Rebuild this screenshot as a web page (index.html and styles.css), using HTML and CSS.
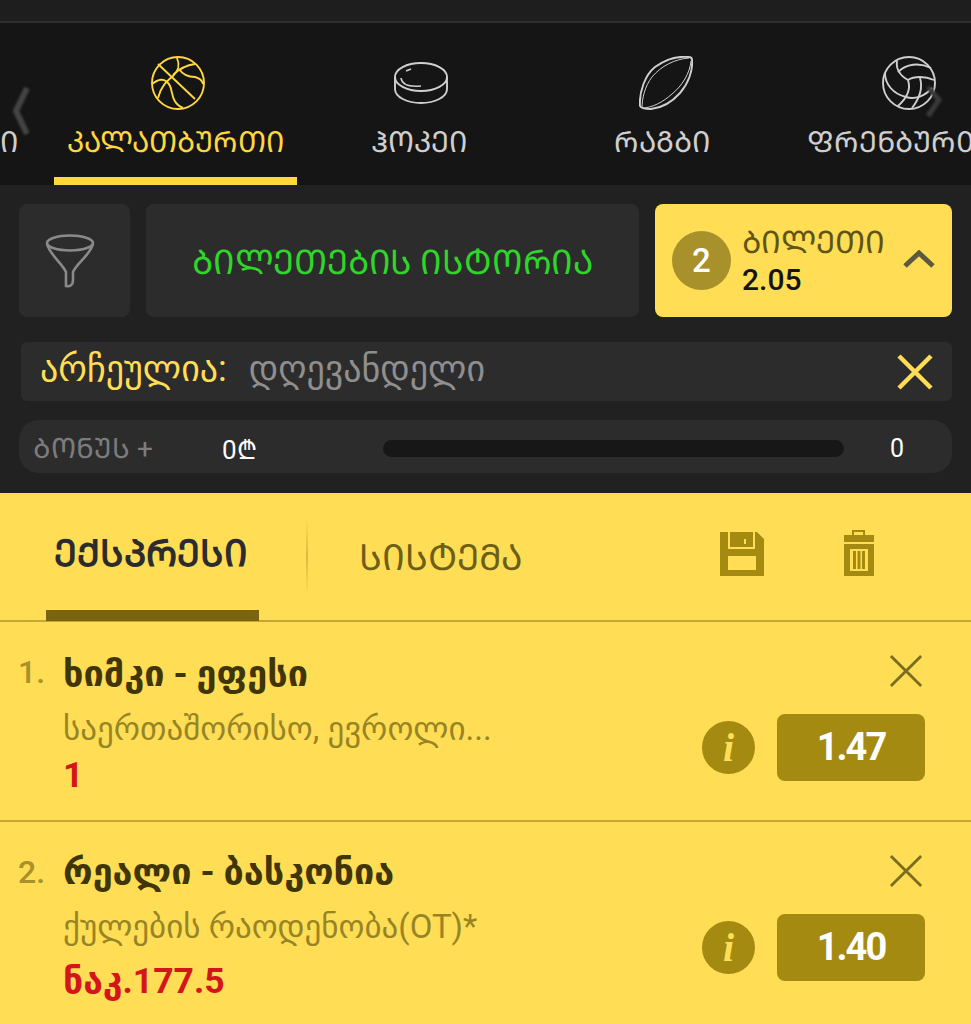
FILE: index.html
```html
<!DOCTYPE html>
<html lang="ka">
<head>
    <meta charset="UTF-8">
    <meta name="viewport" content="width=device-width, initial-scale=1.0">
    <title>ბილეთი</title>
    <link rel="stylesheet" href="styles.css">
</head>
<body>
    <div class="top-strip"></div>

    <nav class="sports">
        <div class="sports-track">
            <a class="sport"><span class="sport-icon"></span><span class="sport-name">ᲤᲔᲮᲑᲣᲠᲗᲘ</span></a>
            <a class="sport active">
                <svg class="sport-icon" viewBox="0 0 54 54" fill="none" stroke="currentColor" stroke-width="1.9">
                    <circle cx="27" cy="27" r="26"/>
                    <path d="M7 8L44 43"/>
                    <path d="M26 2C29 9 28 14 22 20C16 25 10 30 7 42"/>
                    <path d="M44 8C36 9 29 12 22 19"/>
                    <path d="M1 28C6 24 14 20 19 30C22 36 20 47 32 52"/>
                    <path d="M28 13C32 19 39 21 44 21C48 22 51 24 52 28"/>
                </svg>
                <span class="sport-name">ᲙᲐᲚᲐᲗᲑᲣᲠᲗᲘ</span>
            </a>
            <a class="sport">
                <svg class="sport-icon" viewBox="0 0 54 54" fill="none" stroke="currentColor" stroke-width="1.9">
                    <ellipse cx="27" cy="21" rx="26" ry="14"/>
                    <path d="M1 21V33C1 41 13 47 27 47S53 41 53 33V21"/>
                    <path d="M7 22C8 29 16 31 27 30" stroke-width="1.6"/>
                    <path d="M12 15L17 13" stroke-width="1.6"/>
                </svg>
                <span class="sport-name">ᲰᲝᲙᲔᲘ</span>
            </a>
            <a class="sport">
                <svg class="sport-icon" viewBox="0 0 54 54" fill="none" stroke="currentColor" stroke-width="1.9">
                    <path d="M50 1C40 0 27 3 16 11C6 19 0 36 1 50C2 53 8 53 12 53C22 52 33 46 41 37C49 28 54 15 53 4C53 2 52 1 50 1Z"/>
                    <path d="M50 2C36 3 22 10 13 21C6 30 3 42 3 52" stroke-width="1"/>
                    <path d="M52 5C51 17 43 30 33 38C24 46 13 52 3 52" stroke-width="1"/>
                </svg>
                <span class="sport-name">ᲠᲐᲒᲑᲘ</span>
            </a>
            <a class="sport">
                <svg class="sport-icon" viewBox="0 0 54 54" fill="none" stroke="currentColor" stroke-width="1.9">
                    <circle cx="27" cy="27" r="26"/>
                    <path d="M15 5C14 12 17 19 26 24"/>
                    <path d="M16 16C24 8 37 6 49 12"/>
                    <path d="M26 24C32 20 43 20 52 24"/>
                    <path d="M26 24C29 33 25 42 16 50"/>
                    <path d="M3 17C3 28 11 38 24 41"/>
                    <path d="M38 22C41 32 37 43 30 52"/>
                    <path d="M24 41C33 44 43 40 50 32"/>
                </svg>
                <span class="sport-name">ᲤᲠᲔᲜᲑᲣᲠᲗᲘ</span>
            </a>
        </div>
        <svg class="arrow arrow-left" viewBox="0 0 18 50" fill="none" stroke="currentColor" stroke-width="6">
            <path d="M15 2L4 25L15 48"/>
        </svg>
        <svg class="arrow arrow-right" viewBox="0 0 18 34" fill="none" stroke="currentColor" stroke-width="5">
            <path d="M3 2L14 15L3 31"/>
        </svg>
    </nav>

    <section class="panel">
        <div class="actions">
            <button class="action filter-btn">
                <svg class="funnel" viewBox="0 0 50 56" fill="none" stroke="currentColor" stroke-width="2.6">
                    <ellipse cx="25" cy="10" rx="23" ry="7.5"/>
                    <path d="M2 11C5 22 17 30 21 39V53C25 54 28 52 28 47V39C32 30 45 22 48 11"/>
                </svg>
            </button>
            <button class="action history-btn">ᲑᲘᲚᲔᲗᲔᲑᲘᲡ ᲘᲡᲢᲝᲠᲘᲐ</button>
            <button class="action ticket-btn">
                <span class="ticket-count">2</span>
                <span class="ticket-info">
                    <span class="ticket-label">ᲑᲘᲚᲔᲗᲘ</span>
                    <span class="ticket-total">2.05</span>
                </span>
                <svg class="ticket-arrow" viewBox="0 0 32 18" fill="none" stroke="currentColor" stroke-width="5">
                    <path d="M2 16L16 3L30 16"/>
                </svg>
            </button>
        </div>

        <div class="selected">
            <span class="selected-label">არჩეულია:</span>
            <span class="selected-value">დღევანდელი</span>
            <svg class="selected-close" viewBox="0 0 36 36" stroke="currentColor" stroke-width="4.5">
                <path d="M2 2L34 34M34 2L2 34"/>
            </svg>
        </div>

        <div class="bonus">
            <span class="bonus-label">ᲑᲝᲜᲣᲡ +</span>
            <span class="bonus-sum">0₾</span>
            <span class="bonus-bar"></span>
            <span class="bonus-count">0</span>
        </div>
    </section>

    <section class="slip">
        <div class="slip-tabs">
            <a class="slip-tab active">ᲔᲥᲡᲞᲠᲔᲡᲘ</a>
            <span class="slip-divider"></span>
            <a class="slip-tab">ᲡᲘᲡᲢᲔᲛᲐ</a>
            <svg class="save-icon" viewBox="0 0 44 44" fill="currentColor">
                <path fill-rule="evenodd" d="M0 0H37L44 7V44H0ZM8 0V17H35V0H33V15H10V0ZM24 7V12H26V7ZM8 24V38H36V24Z"/>
            </svg>
            <svg class="trash-icon" viewBox="0 0 30 46" fill="currentColor">
                <path fill-rule="evenodd" d="M8 0H21V5H30V12H0V5H8ZM10 2V5H19V2ZM0 14H30V46H0ZM6 19V41H24V19Z"/>
                <path d="M9 21H12V39H9ZM13.5 21H16.5V39H13.5ZM18 21H21V39H18Z"/>
            </svg>
        </div>

        <div class="bet">
            <span class="bet-num">1.</span>
            <div class="bet-main">
                <div class="bet-title">ხიმკი - ეფესი</div>
                <div class="bet-league">საერთაშორისო, ევროლი...</div>
                <div class="bet-pick">1</div>
            </div>
            <div class="bet-side">
                <svg class="bet-close" viewBox="0 0 36 36" stroke="currentColor" stroke-width="3">
                    <path d="M2 2L34 34M34 2L2 34"/>
                </svg>
                <div class="bet-odds-row">
                    <span class="info">i</span>
                    <span class="odds">1.47</span>
                </div>
            </div>
        </div>

        <div class="bet">
            <span class="bet-num">2.</span>
            <div class="bet-main">
                <div class="bet-title">რეალი - ბასკონია</div>
                <div class="bet-league">ქულების რაოდენობა(OT)*</div>
                <div class="bet-pick">ნაკ.177.5</div>
            </div>
            <div class="bet-side">
                <svg class="bet-close" viewBox="0 0 36 36" stroke="currentColor" stroke-width="3">
                    <path d="M2 2L34 34M34 2L2 34"/>
                </svg>
                <div class="bet-odds-row">
                    <span class="info">i</span>
                    <span class="odds">1.40</span>
                </div>
            </div>
        </div>
    </section>
</body>
</html>
```

FILE: styles.css
```css
:root {
    --color-yellow: #ffde55;
    --color-olive: #a58a12;
    --color-panel: #212121;
    --color-box: #2c2c2c;
}

* {
    margin: 0;
    padding: 0;
    box-sizing: border-box;
}

body {
    width: 971px;
    height: 1024px;
    overflow: hidden;
    background-color: var(--color-panel);
    font-family: Roboto, "DejaVu Sans", sans-serif;
}

.top-strip {
    height: 23px;
    background-color: #1e1e1e;
    border-bottom: 2px solid #2f2f2f;
}

/* Sports row */
.sports {
    position: relative;
    height: 162px;
    background-color: #151515;
    overflow: hidden;
}

.sports-track {
    display: flex;
    margin-left: -189px;
}

.sport {
    flex: 0 0 243px;
    height: 162px;
    display: flex;
    flex-direction: column;
    align-items: center;
    padding-top: 33px;
    color: #cfcfcf;
    border-bottom: 8px solid transparent;
}

.sport.active {
    color: #ffd740;
    border-bottom-color: #ffd740;
}

.sport-icon {
    width: 54px;
    height: 54px;
    margin-left: 5px;
}

.sport:nth-child(n+4) .sport-icon {
    margin-left: 9px;
}

.sport-name {
    margin-top: 14px;
    font-size: 29px;
    line-height: 36px;
    white-space: nowrap;
}

.arrow {
    position: absolute;
    color: #444;
    filter: blur(1px);
}

.arrow-left {
    left: 12px;
    top: 63px;
    width: 18px;
    height: 50px;
}

.arrow-right {
    left: 925px;
    top: 62px;
    width: 18px;
    height: 34px;
    color: #3a3a3a;
}

/* Dark panel */
.panel {
    height: 308px;
    padding: 19px 19px 0;
}

.actions {
    display: flex;
    gap: 16px;
    height: 113px;
}

.action {
    border: none;
    border-radius: 8px;
    background-color: var(--color-box);
    font-family: inherit;
    display: flex;
    align-items: center;
    justify-content: center;
}

.filter-btn {
    flex: 0 0 111px;
    color: #8a8a8a;
}

.funnel {
    width: 50px;
    height: 56px;
    margin-right: 10px;
}

.history-btn {
    flex: 0 0 493px;
    color: #2fd62a;
    font-size: 34px;
    letter-spacing: -0.2px;
}

.ticket-btn {
    flex: 0 0 297px;
    background-color: var(--color-yellow);
    justify-content: flex-start;
    padding-left: 17px;
}

.ticket-count {
    width: 59px;
    height: 59px;
    border-radius: 50%;
    background-color: #a8902a;
    color: #fff;
    font-size: 33px;
    font-weight: 500;
    line-height: 59px;
    text-align: center;
}

.ticket-info {
    display: flex;
    flex-direction: column;
    align-items: flex-start;
    margin-left: 11px;
}

.ticket-label {
    color: #5f5416;
    font-size: 31px;
    line-height: 38px;
}

.ticket-total {
    color: #141414;
    font-size: 30px;
    font-weight: 500;
    line-height: 36px;
}

.ticket-arrow {
    width: 32px;
    height: 18px;
    margin: 0 17px 4px auto;
    color: #5b5a3e;
    filter: blur(0.6px);
}

.selected {
    display: flex;
    align-items: center;
    height: 59px;
    margin: 25px 0 0 2px;
    padding: 0 19px;
    border-radius: 6px;
    background-color: var(--color-box);
    font-size: 36px;
}

.selected-label {
    color: var(--color-yellow);
    margin-bottom: 6px;
}

.selected-value {
    margin: 0 0 6px 22px;
    color: #8f8f8f;
}

.selected-close {
    width: 36px;
    height: 36px;
    margin-left: auto;
    color: var(--color-yellow);
}

.bonus {
    display: flex;
    align-items: center;
    height: 53px;
    margin-top: 19px;
    padding: 4px 0 0 14px;
    border-radius: 20px;
    background-color: var(--color-box);
}

.bonus-label {
    width: 189px;
    margin-bottom: 4px;
    color: #7c7c7c;
    font-size: 28px;
}

.bonus-sum {
    width: 161px;
    color: #fff;
    font-size: 26px;
}

.bonus-bar {
    width: 461px;
    height: 17px;
    border-radius: 9px;
    background-color: #171717;
}

.bonus-count {
    margin-left: 46px;
    color: #fff;
    font-size: 25px;
}

/* Yellow slip */
.slip {
    height: 531px;
    background-color: var(--color-yellow);
}

.slip-tabs {
    display: flex;
    align-items: center;
    position: relative;
    height: 129px;
    padding-left: 46px;
    border-bottom: 2px solid #c4a832;
    color: var(--color-olive);
}

.slip-tab {
    color: #6d5f18;
    font-size: 36px;
    white-space: nowrap;
}

.slip-tab.active {
    width: 213px;
    height: 129px;
    padding: 0 8px;
    line-height: 124px;
    color: #2b2c2e;
    font-size: 37px;
    font-weight: 700;
    border-bottom: 11px solid #7a640f;
}

.slip-divider {
    width: 2px;
    height: 78px;
    margin: 0 51px 0 47px;
    background: linear-gradient(to bottom, #ffde55, #d9bc3e, #ffde55);
}

.save-icon {
    width: 44px;
    height: 44px;
    margin-left: auto;
    margin-bottom: 5px;
}

.trash-icon {
    width: 30px;
    height: 46px;
    margin: 0 97px 8px 80px;
}

.bet {
    display: flex;
    height: 200px;
    padding: 32px 46px 0 18px;
    border-bottom: 2px solid #c4a832;
}

.bet + .bet {
    border-bottom: none;
}

.bet-num {
    width: 45px;
    color: #a89128;
    font-size: 32px;
    font-weight: 500;
    line-height: 36px;
}

.bet-main {
    flex: 1;
}

.bet-title {
    color: #3f3505;
    font-size: 36px;
    font-weight: 700;
    line-height: 40px;
}

.bet-league {
    margin-top: 17px;
    color: #978525;
    font-size: 33px;
    line-height: 36px;
}

.bet-pick {
    margin-top: 8px;
    color: #d4161c;
    font-size: 35.5px;
    font-weight: 700;
    line-height: 40px;
}

/* second row sits a little tighter on top, pick lower */
.bet + .bet .bet-main {
    margin-top: -2px;
}

.bet + .bet .bet-pick {
    margin-top: 16px;
}

.bet-side {
    display: flex;
    flex-direction: column;
    align-items: flex-end;
}

.bet-close {
    width: 34px;
    height: 34px;
    margin-right: 2px;
    color: #7a6c20;
}

.bet-odds-row {
    display: flex;
    align-items: center;
    gap: 22px;
    margin-top: 26px;
}

.info {
    width: 53px;
    height: 53px;
    border-radius: 50%;
    background-color: var(--color-olive);
    color: var(--color-yellow);
    font-family: "Liberation Serif", serif;
    font-size: 40px;
    font-style: italic;
    font-weight: 700;
    line-height: 53px;
    text-align: center;
}

.odds {
    width: 148px;
    height: 67px;
    border-radius: 8px;
    background-color: var(--color-olive);
    color: #fff;
    font-size: 38px;
    font-weight: 700;
    letter-spacing: -2px;
    line-height: 67px;
    text-align: center;
}
```
